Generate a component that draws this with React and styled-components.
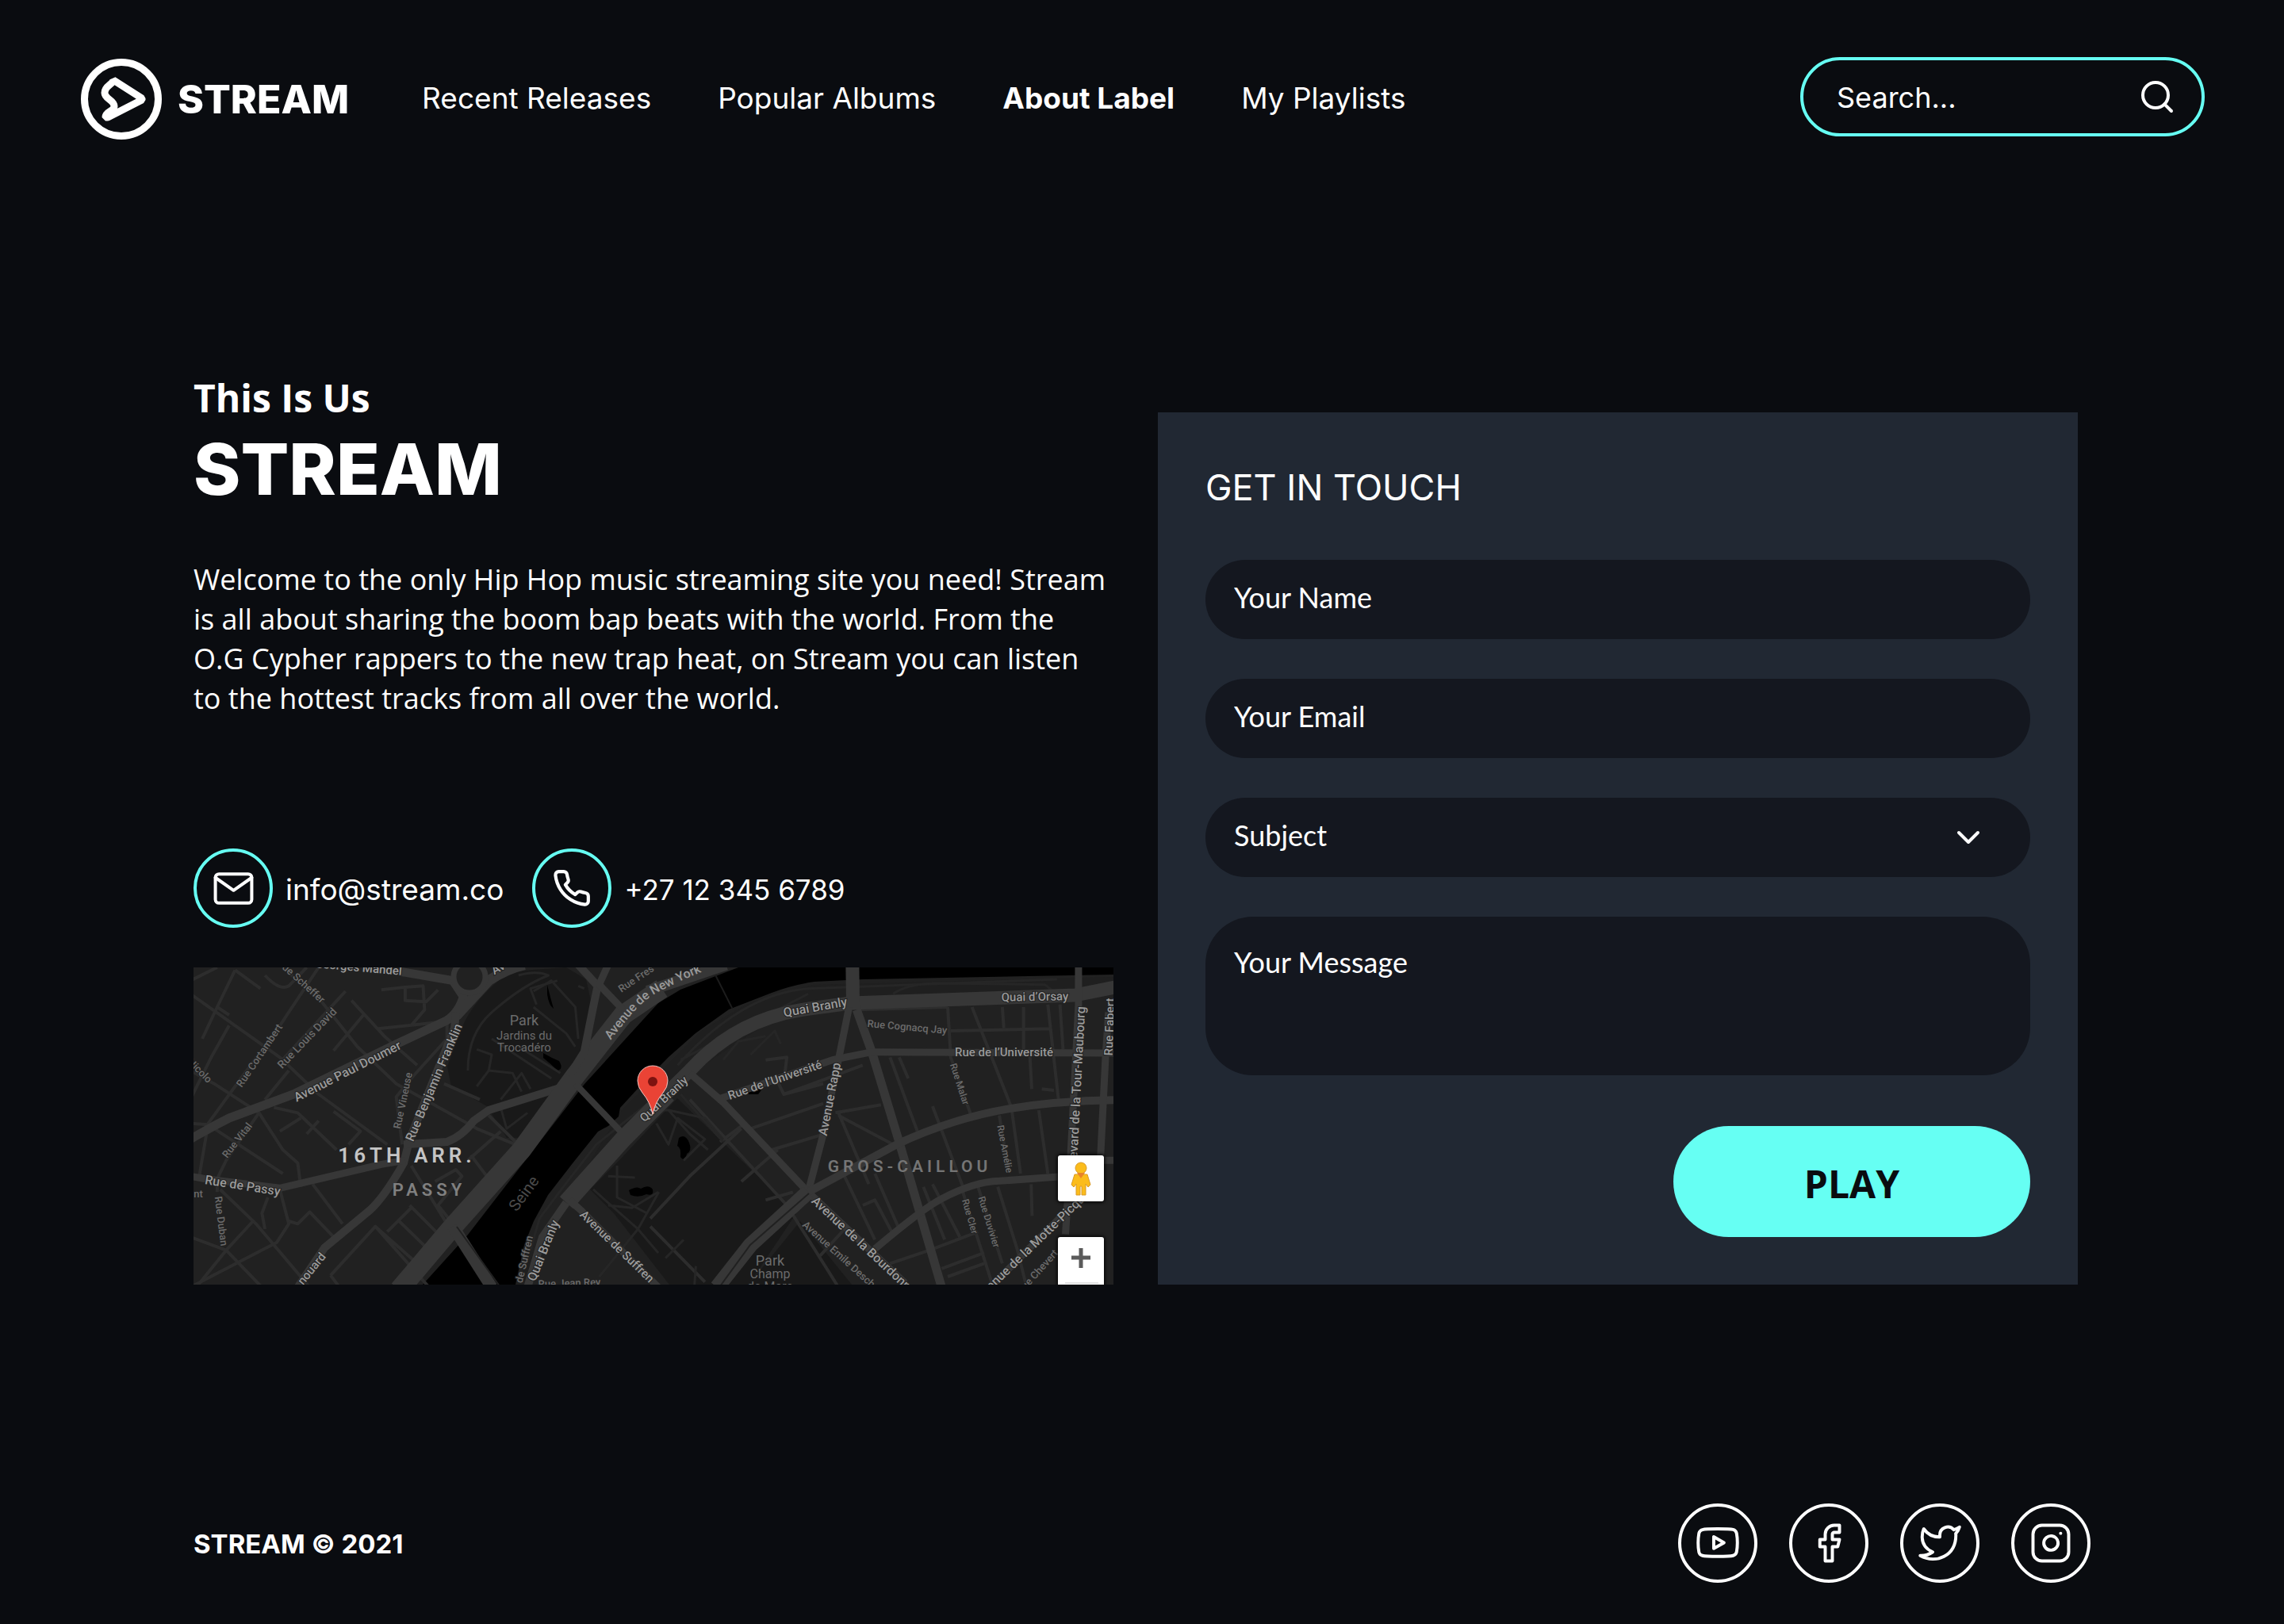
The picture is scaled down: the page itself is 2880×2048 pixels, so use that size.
import React from "react";
import styled, { createGlobalStyle, css } from "styled-components";
import {
  FiChevronDown,
  FiFacebook,
  FiInstagram,
  FiMail,
  FiPhone,
  FiSearch,
  FiTwitter,
  FiYoutube,
} from "react-icons/fi";

const color = {
  page: "#0a0c10",
  panel: "#212833",
  field: "#14171f",
  accent: "#66fff3",
  text: "#ffffff",
};

const font = {
  display: `"Inter", "Roboto", sans-serif`,
  body: `"Open Sans", "Noto Sans", sans-serif`,
  form: `"Lato", "Open Sans", sans-serif`,
};

const GlobalStyle = createGlobalStyle`
  *, *::before, *::after { box-sizing: border-box; }
  body {
    margin: 0;
    background: ${color.page};
    color: ${color.text};
    font-family: ${font.body};
  }
  h1, h2, p, ul { margin: 0; padding: 0; }
  a { color: inherit; text-decoration: none; }
`;

const Page = styled.div`
  min-height: 100vh;
  display: flex;
  flex-direction: column;
`;

/* Header */

const Header = styled.header`
  display: flex;
  align-items: flex-start;
  padding: 72px 100px 0 102px;
`;

const Brand = styled.a`
  display: flex;
  align-items: center;
  gap: 20px;
  padding-top: 2px;
  font: 800 50px/60px ${font.display};
`;

const Nav = styled.nav`
  display: flex;
  gap: 84px;
  margin-left: 92px;
`;

const NavLink = styled.a`
  font: ${(p) => (p.$active ? 700 : 400)} 37px/104px ${font.display};
  white-space: nowrap;
`;

const SearchBox = styled.form`
  display: flex;
  align-items: center;
  width: 510px;
  height: 100px;
  margin-left: auto;
  padding: 0 32px 0 42px;
  border: 4px solid ${color.accent};
  border-radius: 50px;
`;

const SearchLabel = styled.label`
  display: flex;
  flex: 1;
  min-width: 0;
`;

const SearchInput = styled.input`
  width: 100%;
  padding: 2px 0 0;
  border: 0;
  outline: 0;
  background: none;
  color: inherit;
  font: 400 36px/48px ${font.display};
  &::placeholder { color: ${color.text}; opacity: 1; }
`;

const IconButton = styled.button`
  display: flex;
  padding: 0;
  border: 0;
  background: none;
  color: inherit;
  cursor: pointer;
`;

/* Main */

const Main = styled.main`
  display: grid;
  grid-template-columns: minmax(0, 1fr) minmax(0, 1fr);
  align-items: end;
  gap: 56px;
  padding: 294px 260px 0 244px;
`;

const Eyebrow = styled.p`
  font: 700 48px/64px ${font.body};
`;

const Title = styled.h1`
  margin-top: 10px;
  font: 800 90px/96px ${font.display};
`;

const Intro = styled.p`
  max-width: 1155px;
  margin-top: 66px;
  font: 400 36px/50px ${font.body};
`;

const Contacts = styled.address`
  display: flex;
  gap: 36px;
  margin-top: 164px;
  font-style: normal;
`;

const Contact = styled.a`
  display: flex;
  align-items: center;
  gap: 16px;
  font: 400 ${(p) => p.$size}px/48px ${font.display};
  white-space: nowrap;
`;

const ContactText = styled.span`
  padding-top: 4px;
`;

const ring = css`
  display: flex;
  flex: none;
  align-items: center;
  justify-content: center;
  width: 100px;
  height: 100px;
  border-radius: 50%;
`;

const ContactRing = styled.span`
  ${ring}
  border: 4px solid ${color.accent};
`;

const MapFrame = styled.section`
  position: relative;
  height: 400px;
  margin-top: 50px;
  overflow: hidden;
  background: #212121;
`;

const MapSvg = styled.svg`
  display: block;
  width: 100%;
  height: 100%;
`;

const MapControls = styled.div`
  position: absolute;
  top: 237px;
  right: 12px;
  display: flex;
  flex-direction: column;
  gap: 45px;
`;

const MapButton = styled.button`
  display: flex;
  width: 58px;
  height: ${(p) => (p.$tall ? 116 : 58)}px;
  padding: 0;
  border: 0;
  border-radius: 3px;
  background: #ffffff;
  box-shadow: 0 0 4px 1px #000000;
  cursor: pointer;
`;

/* Form */

const Panel = styled.form`
  display: flex;
  flex-direction: column;
  gap: 50px;
  padding: 60px;
  background: ${color.panel};
`;

const PanelTitle = styled.h2`
  margin-bottom: 6px;
  font: 400 45px/70px ${font.display};
`;

const FieldLabel = styled.label`
  display: block;
  position: relative;
  svg {
    position: absolute;
    top: 26px;
    right: 54px;
    pointer-events: none;
  }
`;

const field = css`
  display: block;
  width: 100%;
  border: 0;
  outline: 0;
  background: ${color.field};
  color: ${color.text};
  font: 400 36px/44px ${font.form};
  &::placeholder { color: ${color.text}; opacity: 1; }
`;

const TextField = styled.input`
  ${field}
  height: 100px;
  padding: 0 36px 6px;
  border-radius: 50px;
`;

const SelectField = styled.select`
  ${field}
  height: 100px;
  padding: 0 120px 6px 36px;
  border-radius: 50px;
  appearance: none;
`;

const MessageField = styled.textarea`
  ${field}
  height: 200px;
  padding: 35px 36px;
  border-radius: 60px;
  resize: none;
`;

const Submit = styled.button`
  align-self: flex-end;
  width: 450px;
  height: 140px;
  margin-top: 14px;
  padding: 6px 0 0;
  border: 0;
  border-radius: 70px;
  background: ${color.accent};
  color: ${color.page};
  font: 700 48px/64px ${font.body};
  cursor: pointer;
`;

/* Footer */

const Footer = styled.footer`
  display: flex;
  align-items: center;
  justify-content: space-between;
  padding: 276px 244px 52px;
`;

const Copyright = styled.p`
  padding-top: 2px;
  font: 700 33px/48px ${font.display};
`;

const Socials = styled.ul`
  display: flex;
  gap: 40px;
  list-style: none;
`;

const SocialLink = styled.a`
  ${ring}
  border: 4px solid ${color.text};
`;

const WEST = "translate(-4 -10) scale(0.37628 0.33333)";
const EAST = "translate(576 -10) scale(0.38266 0.33333)";

const lanesWest = [
  "M0 130L300 370L430 510L660 700",
  "M150 40L90 180L130 210M90 180L40 300",
  "M430 30L300 250L150 480L60 620L30 820",
  "M520 120L300 390M330 420L250 530",
  "M250 60Q300 120 330 100L390 30M150 40L235 110M0 80L90 30",
  "M310 30L440 160L560 330L690 470L960 640L1090 700",
  "M540 155L650 290L760 400M580 210L480 345M630 262L850 235",
  "M640 115L720 105L780 100L785 190L740 250M720 105L720 155L790 160L830 115",
  "M860 240L860 300L740 450L690 520L710 700",
  "M0 420L80 470L230 580L310 720L360 770L370 860",
  "M0 620L60 625L310 810M0 530L70 370L130 250",
  "M230 580L120 760L90 830L90 880M280 560L360 580L490 720",
  "M300 650L370 600M390 660L430 610M480 575L570 650L530 700",
  "M300 870L330 1000L290 1070L0 1240M100 870L220 1000L400 1240",
  "M410 850L510 1000M260 900L240 960L250 1020M330 990L360 1000L400 955L480 1050",
  "M0 1050L120 1100L20 1240M120 1100L240 1240M120 1100L210 990",
  "M470 1195L620 1010L800 1240M470 1195L500 1240M620 1010L750 1140",
  "M735 930L850 1060M660 1030L740 940M700 990L800 1100L860 1040",
  "M740 780L860 1000M820 840L890 795L910 820L830 930L880 1000",
  "M850 470L970 530M1000 590L1090 690M940 740L1000 830M1040 650L930 760",
];

const pathsWest = [
  "M1100 60Q1160 40 1200 60Q1110 100 1010 200Q930 280 930 420",
  "M1150 120L1210 80L1290 180L1300 300M1150 180L1260 280L1290 330",
  "M960 340L1010 360L1000 420L960 480M1000 420L1080 430L1110 500M1040 530L1110 430L1140 490",
  "M1160 170L1140 110L1230 80M1300 100L1320 110M1010 300L1210 450M1100 330L1240 430",
  "M1040 560L1060 640L1130 580M1560 520L1360 700L1250 860L1170 980L1140 1100",
  "M1430 780L1430 900L1530 960M1350 870L1500 1020L1568 1110M1400 930L1480 940L1568 880",
  "M1570 880L1500 1020L1370 1200M1400 820L1490 825",
];

const lanesEast = [
  "M330 640L570 545M400 720L560 665M610 580L760 550M300 840L420 720M230 690L300 630",
  "M620 580L720 850M620 590L800 700M640 820L740 1060M740 810L820 1020M700 930L740 910L800 1040",
  "M790 370L880 650M820 370L850 450M930 555L1030 860M930 850L1020 1050M900 860L970 1060",
  "M980 180L990 370L1060 600M1060 180L1190 560L1220 810M1160 180L1165 260M1230 180L1230 340",
  "M1310 170L1345 530M1350 170L1360 340M990 270L1320 262M690 190L980 180",
  "M1250 350L1257 490M1290 490L1330 495M1280 570L1310 810M1150 590L1180 800",
  "M1145 860L1210 1100L1240 1240M1255 850L1258 970M1080 860L1160 1150M1030 880L1130 1240",
  "M790 1150L920 1100L1080 1030M960 1170L1100 1110M980 1200L1100 1150",
  "M410 440L440 510L700 400M440 510L570 470M380 380L450 370L440 460",
  "M560 1120L640 1020M0 980L130 820L300 640M0 1010L180 1220M380 910L470 880M130 530L450 930L620 1240",
];

const pathsEast = [
  "M90 400Q300 130 520 110L1340 75M100 380L520 130",
  "M0 570L60 570L180 600L240 680M60 570L130 660L190 720M20 620L60 700L90 600L180 680L110 760",
  "M100 510L240 690M50 1130L110 1060M150 1160L145 1240M800 130Q850 90 950 90L1300 95L1350 140",
  "M240 380L290 310L380 290M330 360L410 270L430 320",
];

const ferryEast = ["M215 60L270 185"];

const avenuesWest = [
  { d: "M0 680Q60 640 130 600L345 510L700 315L860 230Q900 200 915 140L880 80L700 45", w: 11 },
  { d: "M890 215L1000 80Q1060 35 1120 20", w: 13 },
  { d: "M890 200L885 260L735 680L715 770Q650 900 600 950L450 1090L360 1240", w: 10 },
  { d: "M0 820L50 830L300 865L640 775L720 760", w: 9 },
  { d: "M715 700L860 690Q910 670 950 610L1000 570L1240 485", w: 10 },
  { d: "M1580 110L1450 210L1290 440L1110 720L880 1010L700 1250", w: 25 },
  { d: "M1290 470L1450 660", w: 8 },
  { d: "M880 1010L1010 1240", w: 15 },
  { d: "M1300 20L1365 100L1350 180L1320 350L1270 440", w: 10 },
  { d: "M1400 20L1370 95L1450 190", w: 9 },
  { d: "M1600 510L1450 680L1260 920", w: 22 },
  { d: "M1260 920L1180 1050L1130 1240", w: 10 },
  { d: "M1270 910L1310 950L1568 1240", w: 9 },
];

const avenuesEast = [
  { d: "M-20 590L130 420Q280 230 500 190L660 165L1400 135L1530 105", w: 17 },
  { d: "M-10 120L250 20", w: 14 },
  { d: "M666 20L668 190", w: 17 },
  { d: "M655 180L620 380L570 660L520 880", w: 9 },
  { d: "M680 190L730 350L820 690L960 1240", w: 11 },
  { d: "M220 530L600 380L730 350L1530 354", w: 9 },
  { d: "M130 430L240 540L520 880L840 1225", w: 9 },
  { d: "M520 880L820 695Q1000 600 1180 565Q1340 535 1530 532", w: 10 },
  { d: "M740 1095Q900 940 960 905Q1070 840 1150 838L1345 822", w: 9 },
  { d: "M520 880L330 1080L220 1240", w: 19 },
  { d: "M1411 20L1411 170L1385 740L1368 1040", w: 9 },
  { d: "M1510 200L1500 370L1483 760L1530 760", w: 9 },
  { d: "M1400 920L1120 1240", w: 9 },
];

const MAJOR = "#9a9a9a";
const MINOR = "#6b6b6b";

/* x, y, angle, size, colour, name */
const streetLabels = [
  [194, 131, -27, 16, MAJOR, "Avenue Paul Doumer"],
  [303, 145, -67, 16, MAJOR, "Rue Benjamin Franklin"],
  [62, 275, 9, 16, MAJOR, "Rue de Passy"],
  [784, 50, -10, 16, MAJOR, "Quai Branly"],
  [1061, 37, -1, 15, MAJOR, "Quai d’Orsay"],
  [1022, 107, 0, 15, MAJOR, "Rue de l’Université"],
  [733, 142, -19, 15, MAJOR, "Rue de l’Université"],
  [802, 166, -79, 16, MAJOR, "Avenue Rapp"],
  [441, 357, -68, 16, MAJOR, "Quai Branly"],
  [534, 352, 44, 15, MAJOR, "Avenue de Suffren"],
  [593, 166, -43, 15, MAJOR, "Quai Branly"],
  [149, 380, -51, 15, MAJOR, "nouard"],
  [208, 0, 5, 15, MAJOR, "Georges Mandel"],
  [1113, 161, -87, 16, MAJOR, "Boulevard de la Tour-Maubourg"],
  [1155, 75, -88, 15, MAJOR, "Rue Fabert"],
  [850, 355, 43, 16, MAJOR, "Avenue de la Bourdonnais"],
  [1060, 348, -44, 16, MAJOR, "Avenue de la Motte-Picquet"],
  [384, 1, -30, 15, MAJOR, "Av"],
  [558, 14, -34, 13, MINOR, "Rue Fres"],
  [417, 368, -77, 13, MINOR, "de Suffren"],
  [474, 398, -2, 13, MINOR, "Rue Jean Rey"],
  [35, 320, 83, 13, MINOR, "Rue Duban"],
  [55, 218, -52, 13, MINOR, "Rue Vital"],
  [83, 111, -56, 13, MINOR, "Rue Cortambert"],
  [143, 89, -46, 14, MINOR, "Rue Louis David"],
  [139, 20, 42, 13, MINOR, "de Scheffer"],
  [8, 130, 45, 13, MINOR, "Nicolo"],
  [264, 168, -78, 13, MINOR, "Rue Vineuse"],
  [6, 285, 0, 13, MINOR, "nt"],
  [900, 75, 5, 13, MINOR, "Rue Cognacq Jay"],
  [966, 147, 72, 12, MINOR, "Rue Malar"],
  [1023, 229, 79, 12, MINOR, "Rue Amélie"],
  [979, 314, 74, 12, MINOR, "Rue Cler"],
  [1003, 321, 73, 12, MINOR, "Rue Duvivier"],
  [823, 370, 42, 13, MINOR, "Avenue Emile Deschanel"],
  [1064, 384, -48, 13, MINOR, "Rue Chevert"],
];

const placeLabels = [
  [417, 73, 18, "Park"],
  [417, 91, 15, "Jardins du"],
  [417, 106, 15, "Trocadéro"],
  [727, 376, 18, "Park"],
  [727, 392, 16, "Champ"],
  [727, 408, 16, "de Mars"],
];

const District = styled.text`
  font: 600 ${(p) => p.$size}px "Roboto", sans-serif;
  letter-spacing: 5px;
  text-anchor: middle;
`;

const Street = styled.text`
  font-family: "Roboto", sans-serif;
  font-weight: 500;
  text-anchor: middle;
  dominant-baseline: central;
  paint-order: stroke;
  stroke: #212121;
  stroke-width: 2px;
`;

const Place = styled.text`
  font-family: "Roboto", sans-serif;
  text-anchor: middle;
`;

const Strokes = ({ sheet, items, stroke, width }) => (
  <g transform={sheet} fill="none" stroke={stroke} strokeLinejoin="round">
    {items.map((item, i) => (
      <path
        key={i}
        d={item.d || item}
        strokeWidth={item.w || width}
        vectorEffect="non-scaling-stroke"
      />
    ))}
  </g>
);

function CityMap() {
  return (
    <MapFrame aria-label="Map">
      <MapSvg viewBox="0 0 1160 400" preserveAspectRatio="xMidYMid slice">
        <g fill="#191919">
          <path d="M400 5Q350 40 335 85L320 125L325 150L370 175L395 215L410 215L450 160L490 120L505 60L495 15L470 0Z" />
          <path d="M610 165L760 310L700 400L600 400L530 310L500 280L540 240Z" />
          <path d="M765 320L830 400L700 400Z" />
          <path d="M540 180L570 150L640 80L700 45L780 22L1160 12L1160 30L830 42L740 60L640 125L580 185L490 290L470 300L440 340L415 400L405 400Z" fill="#1f1f1f" />
        </g>
        <path
          fill="#000"
          d="M493 147L586 45L614 28L687 0H1160V9L844 15L783 18Q755 22 729 32L675 53L633 83L599 113L560 153L538 177L536 188L523 200L510 207L478 247L447 287L429 320L417 350L406 400H289L346 337Z"
        />
        <g fill="#000">
          <path d="M612 215q8 -6 13 6q4 10 -3 14q-2 12 -8 4q1 -12 -4 -14z" />
          <path d="M549 281q10 -6 15 -2q10 -6 15 1q2 9 -8 6q-10 5 -20 1z" />
          <path d="M441 108q10 6 20 10q6 10 -2 12q-8 -8 -18 -16z" />
          <path d="M446 22q4 16 8 30q-6 -4 -8 -18z" />
          <path d="M698 152q10 -8 20 0l-6 8h-12z" />
        </g>
        <Strokes sheet={WEST} items={lanesWest} stroke="#2d2d2d" width={4} />
        <Strokes sheet={EAST} items={lanesEast} stroke="#2d2d2d" width={4} />
        <Strokes sheet={WEST} items={pathsWest} stroke="#262626" width={3} />
        <Strokes sheet={EAST} items={pathsEast} stroke="#262626" width={3} />
        <Strokes sheet={EAST} items={ferryEast} stroke="#1c1c1c" width={2} />
        <Strokes sheet={WEST} items={avenuesWest} stroke="#373737" />
        <Strokes sheet={EAST} items={avenuesEast} stroke="#373737" />
        <circle cx="348" cy="12" r="20" fill="#212121" stroke="#373737" strokeWidth="7" />
        <path d="M332 327L386 402M776 285L702 350L664 402" fill="none" stroke="#212121" strokeWidth="2" />

        {streetLabels.map(([x, y, angle, size, fill, text], i) => (
          <Street key={i} transform={`translate(${x} ${y}) rotate(${angle})`} fontSize={size} fill={fill}>
            {text}
          </Street>
        ))}
        {placeLabels.map(([x, y, size, text], i) => (
          <Place key={i} x={x} y={y} fontSize={size} fill={MINOR}>
            {text}
          </Place>
        ))}
        <Place transform="translate(422 289) rotate(-54)" fontSize="20" fill="#4a4a4a">
          Seine
        </Place>
        <path id="quay-line" d="M526 92C552 58 566 41 588 30S620 14 650 2" fill="none" />
        <text fontFamily="Roboto, sans-serif" fontSize="16" fontWeight="500" fill={MAJOR}>
          <textPath href="#quay-line">Avenue de New York</textPath>
        </text>
        <District x="269" y="246" $size={26} fill="#c4c4c4">16TH ARR.</District>
        <District x="297" y="288" $size={22} fill="#808080">PASSY</District>
        <District x="903" y="258" $size={21} fill="#757575">GROS-CAILLOU</District>

        <path
          d="M579 185Q576 170 566 158Q560 151 560 143A19 19 0 0 1 598 143Q598 151 592 158Q582 170 579 185Z"
          fill="#ea4335"
          stroke="#f3c4c0"
          strokeWidth="1"
        />
        <circle cx="579" cy="144" r="6" fill="#7d1310" />
      </MapSvg>
      <MapControls>
        <MapButton type="button" aria-label="Street view">
          <svg width="58" height="58" viewBox="0 0 58 58" aria-hidden="true">
            <path d="M21 24h16l4 13-3 3-3-4v14h-5V39h-2v11h-5V36l-3 4-3-3z" fill="#fbbc1b" stroke="#d99a26" strokeWidth="1" />
            <circle cx="29" cy="16" r="7" fill="#fbbc1b" stroke="#d99a26" strokeWidth="1" />
            <path d="M24 22h10l-5 7z" fill="#e8832a" />
          </svg>
        </MapButton>
        <MapButton type="button" aria-label="Zoom in" $tall>
          <svg width="58" height="60" viewBox="0 0 58 60" aria-hidden="true">
            <path d="M29 14v25M17 26h24" stroke="#5b5b5b" strokeWidth="5" />
            <path d="M9 58h42" stroke="#e2e2e2" strokeWidth="2" />
          </svg>
        </MapButton>
      </MapControls>
    </MapFrame>
  );
}

const LogoMark = () => (
  <svg width="102" height="102" viewBox="0 0 102 102" fill="none" stroke="#fff" aria-hidden="true">
    <circle cx="51" cy="51" r="46.5" strokeWidth="9" />
    <path
      d="M41 27C40 33 30 34 30 43C30 51 42 52 42 60C42 67 31 66 31 74L34 74L77 52V50Z"
      strokeWidth="9"
      strokeLinejoin="bevel"
    />
  </svg>
);

const navItems = ["Recent Releases", "Popular Albums", "About Label", "My Playlists"];

const socials = [
  ["YouTube", FiYoutube],
  ["Facebook", FiFacebook],
  ["Twitter", FiTwitter],
  ["Instagram", FiInstagram],
];

export default function App() {
  return (
    <Page>
      <GlobalStyle />
      <Header>
        <Brand href="#home">
          <LogoMark />
          STREAM
        </Brand>
        <Nav>
          {navItems.map((item) => (
            <NavLink
              key={item}
              href="#"
              $active={item === "About Label"}
              aria-current={item === "About Label" ? "page" : undefined}
            >
              {item}
            </NavLink>
          ))}
        </Nav>
        <SearchBox role="search">
          <SearchLabel htmlFor="search" aria-label="Search">
            <SearchInput id="search" type="text" placeholder="Search..." aria-label="Search" />
          </SearchLabel>
          <IconButton type="submit" aria-label="Search">
            <FiSearch size={48} />
          </IconButton>
        </SearchBox>
      </Header>

      <Main>
        <div>
          <Eyebrow>This Is Us</Eyebrow>
          <Title>STREAM</Title>
          <Intro>
            Welcome to the only Hip Hop music streaming site you need! Stream is all about sharing
            the boom bap beats with the world. From the O.G Cypher rappers to the new trap heat, on
            Stream you can listen to the hottest tracks from all over the world.
          </Intro>
          <Contacts>
            <Contact href="mailto:info@stream.co" $size={37}>
              <ContactRing>
                <FiMail size={55} strokeWidth={1.75} />
              </ContactRing>
              <ContactText>info@stream.co</ContactText>
            </Contact>
            <Contact href="tel:+27123456789" $size={35}>
              <ContactRing>
                <FiPhone size={50} strokeWidth={2} />
              </ContactRing>
              <ContactText>+27 12 345 6789</ContactText>
            </Contact>
          </Contacts>
          <CityMap />
        </div>

        <Panel>
          <PanelTitle>GET IN TOUCH</PanelTitle>
          <FieldLabel htmlFor="name">
            <TextField id="name" type="text" placeholder="Your Name" aria-label="Your Name" />
          </FieldLabel>
          <FieldLabel htmlFor="email">
            <TextField id="email" type="email" placeholder="Your Email" aria-label="Your Email" />
          </FieldLabel>
          <FieldLabel htmlFor="subject">
            <SelectField id="subject" defaultValue="" aria-label="Subject">
              <option value="">Subject</option>
            </SelectField>
            <FiChevronDown size={48} />
          </FieldLabel>
          <FieldLabel htmlFor="message">
            <MessageField id="message" placeholder="Your Message" aria-label="Your Message" />
          </FieldLabel>
          <Submit type="submit">PLAY</Submit>
        </Panel>
      </Main>

      <Footer>
        <Copyright>STREAM © 2021</Copyright>
        <Socials>
          {socials.map(([name, Icon]) => (
            <li key={name}>
              <SocialLink href="#" aria-label={name}>
                <Icon size={54} strokeWidth={1.75} />
              </SocialLink>
            </li>
          ))}
        </Socials>
      </Footer>
    </Page>
  );
}
